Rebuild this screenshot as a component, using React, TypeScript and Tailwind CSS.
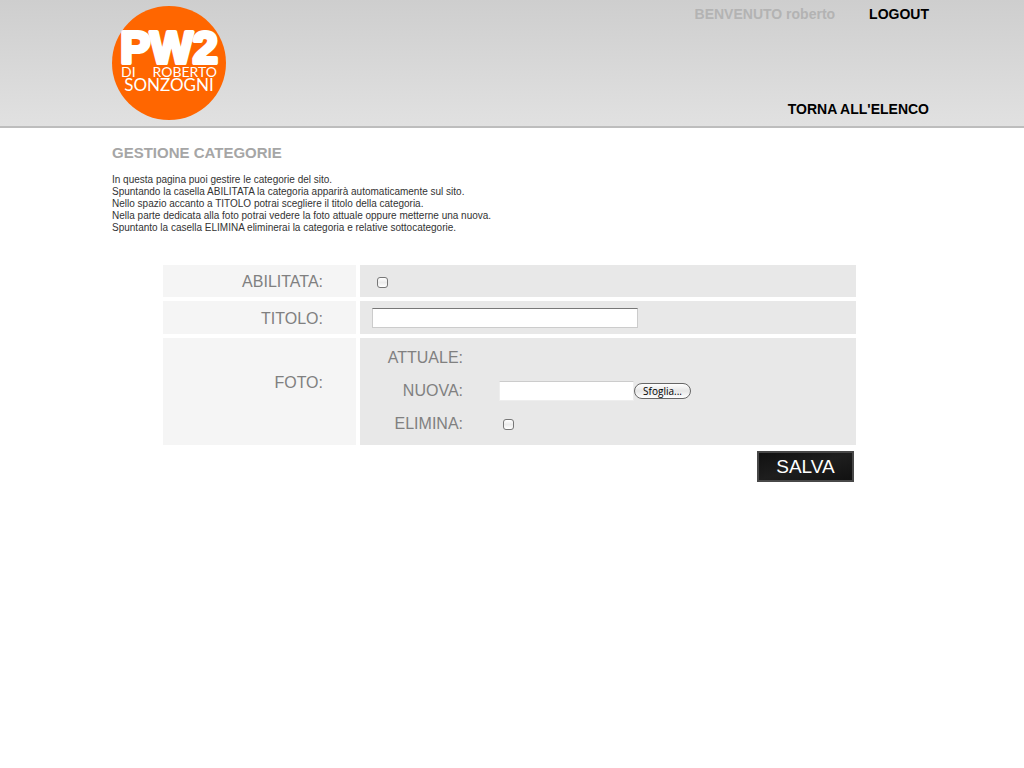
import { useRef, useState } from "react";

function Logo() {
  return (
    <svg
      viewBox="0 0 114 114"
      className="size-[114px]"
      role="img"
      aria-label="PW2 di Roberto Sonzogni"
    >
      <circle cx="57" cy="57" r="57" fill="#ff6600" />
      <g fill="#ffffff">
        <text
          x="57"
          y="57"
          textAnchor="middle"
          fontSize="45"
          fontWeight="700"
          stroke="#ffffff"
          strokeWidth="4"
          strokeLinejoin="round"
          className="font-['Liberation_Sans',sans-serif]"
        >
          PW2
        </text>
        <text x="9" y="71" fontSize="14" className="font-['Lato',sans-serif]">
          DI
        </text>
        <text
          x="105"
          y="71"
          textAnchor="end"
          fontSize="14"
          className="font-['Lato',sans-serif]"
        >
          ROBERTO
        </text>
        <text
          x="57"
          y="85"
          textAnchor="middle"
          fontSize="17"
          className="font-['Lato',sans-serif]"
        >
          SONZOGNI
        </text>
      </g>
    </svg>
  );
}

const checkboxClass =
  "block size-[11px] appearance-none rounded-[3px] border border-[#777777] bg-linear-to-b from-white via-[#ececec] to-white checked:bg-[#555555] checked:bg-none";

const labelCell = "flex items-center justify-end bg-[#f5f5f5] pt-[2px] pr-[33px]";

export default function App() {
  const picker = useRef<HTMLInputElement>(null);
  const [fileName, setFileName] = useState("");

  return (
    <div className="min-h-screen bg-white font-['Liberation_Sans',Arial,sans-serif]">
      <header className="border-b-2 border-[#bdbdbd] bg-linear-to-b from-[#cecece] to-[#e1e1e1] pr-[95px] pl-28">
        <div className="flex justify-between pt-[6px] pb-[6px]">
          <Logo />
          <div className="flex flex-col items-end justify-between pb-[3px] text-sm leading-4 font-bold">
            <div className="flex gap-[34px]">
              <span className="text-[#b3b3b3]">BENVENUTO roberto</span>
              <a href="#logout" className="text-black">
                LOGOUT
              </a>
            </div>
            <a href="#elenco" className="text-black">
              TORNA ALL'ELENCO
            </a>
          </div>
        </div>
      </header>

      <main className="pt-[15px] pr-[95px] pl-28">
        <h1 className="text-[15px] leading-5 font-bold text-[#a6a6a6]">
          GESTIONE CATEGORIE
        </h1>
        <p className="mt-[11px] text-[10px] leading-3 text-[#333333]">
          In questa pagina puoi gestire le categorie del sito.
          <br />
          Spuntando la casella ABILITATA la categoria apparirà automaticamente
          sul sito.
          <br />
          Nello spazio accanto a TITOLO potrai scegliere il titolo della
          categoria.
          <br />
          Nella parte dedicata alla foto potrai vedere la foto attuale oppure
          metterne una nuova.
          <br />
          Spuntanto la casella ELIMINA eliminerai la categoria e relative
          sottocategorie.
        </p>

        <form
          className="mt-[31px] mr-[73px] ml-[51px] text-base text-[#808080]"
          onSubmit={(e) => e.preventDefault()}
        >
          <div className="grid grid-cols-[193px_1fr] gap-1">
            <label htmlFor="abilitata" className={labelCell}>
              ABILITATA:
            </label>
            <div className="flex h-8 items-center bg-[#e8e8e8] pt-[2px] pl-[17px]">
              <input id="abilitata" type="checkbox" className={checkboxClass} />
            </div>

            <label htmlFor="titolo" className={labelCell}>
              TITOLO:
            </label>
            <div className="flex h-[33px] items-center bg-[#e8e8e8] pl-3">
              <input
                id="titolo"
                type="text"
                className="h-5 w-[266px] border border-[#cccccc] border-t-[#777777] bg-white px-1 text-xs text-black"
              />
            </div>

            <div className="flex justify-end bg-[#f5f5f5] pt-[33px] pr-[33px]">
              FOTO:
            </div>
            <div className="grid grid-cols-[103px_1fr] content-start gap-x-9 gap-y-[9px] bg-[#e8e8e8] pt-2 pb-[9px]">
              <span className="text-right">ATTUALE:</span>
              <span />

              <label htmlFor="nuova" className="text-right">
                NUOVA:
              </label>
              <div className="flex items-center">
                <input
                  id="nuova"
                  type="text"
                  readOnly
                  value={fileName}
                  className="h-5 w-[135px] border border-[#eeeeee] border-t-[#cccccc] bg-white px-1 text-xs text-black"
                />
                <input
                  ref={picker}
                  type="file"
                  aria-label="Scegli la foto"
                  className="hidden"
                  onChange={(e) => setFileName(e.target.files?.[0]?.name ?? "")}
                />
                <button
                  type="button"
                  onClick={() => picker.current?.click()}
                  className="flex h-4 w-[57px] items-center justify-center rounded-full border border-[#666666] bg-linear-to-b from-white via-[#e6e6e6] to-white font-['Open_Sans',sans-serif] text-[10px] leading-3 font-medium text-black"
                >
                  Sfoglia...
                </button>
              </div>

              <label htmlFor="elimina" className="text-right">
                ELIMINA:
              </label>
              <div className="flex items-center pl-1">
                <input id="elimina" type="checkbox" className={checkboxClass} />
              </div>
            </div>
          </div>

          <div className="mt-[6px] flex justify-end pr-[2px]">
            <button
              type="submit"
              className="h-[31px] w-[97px] border-2 border-[#484848] bg-linear-to-br from-[#111111] via-[#1e1e1e] to-[#111111] text-[19px] leading-6 text-white"
            >
              SALVA
            </button>
          </div>
        </form>
      </main>
    </div>
  );
}
